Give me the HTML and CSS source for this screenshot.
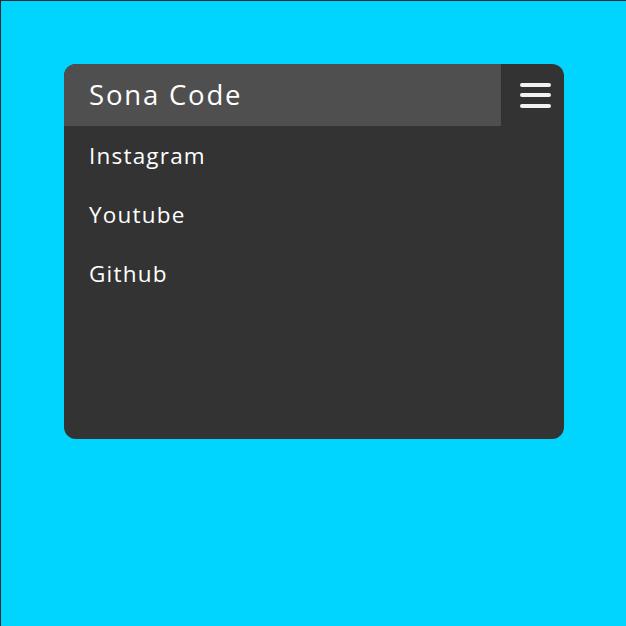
FILE: index.html
```html
<!DOCTYPE html>
<html>
<head>
<meta charset="utf-8">
<link rel="stylesheet" href="styles.css">
</head>
<body>
<div class="card">
  <header class="bar">
    <div class="title">Sona Code</div>
    <div class="menu"><span></span><span></span><span></span></div>
  </header>
  <nav class="links">
    <a class="link">Instagram</a>
    <a class="link">Youtube</a>
    <a class="link">Github</a>
  </nav>
</div>
</body>
</html>
```
FILE: styles.css
```css
html { background: #00d5ff; }
body {
  margin: 0;
  width: 626px;
  height: 626px;
  box-sizing: border-box;
  border-top: 1px solid #2a2a2a;
  border-left: 1px solid #2a2a2a;
  padding: 63px 0 0 63px;
  font-family: "Open Sans", "Noto Sans", sans-serif;
  color: #fff;
}
.card {
  width: 500px;
  height: 375px;
  background: #333333;
  border-radius: 12px;
  overflow: hidden;
}
.bar {
  display: flex;
  height: 62px;
}
.title {
  flex: 1;
  background: #4f4f4f;
  padding-left: 25px;
  font-size: 27.5px;
  letter-spacing: 1.8px;
  line-height: 62px;
}
.menu {
  width: 63px;
  box-sizing: border-box;
  padding-left: 6px;
  display: flex;
  flex-direction: column;
  justify-content: center;
  align-items: center;
  gap: 6.5px;
}
.menu span {
  display: block;
  width: 31px;
  height: 4px;
  border-radius: 2px;
  background: #f2f2f2;
}
.links {
  display: flex;
  flex-direction: column;
  padding-left: 25px;
}
.link {
  font-size: 22.5px;
  letter-spacing: 1.2px;
  line-height: 59px;
  color: #fff;
}
```
